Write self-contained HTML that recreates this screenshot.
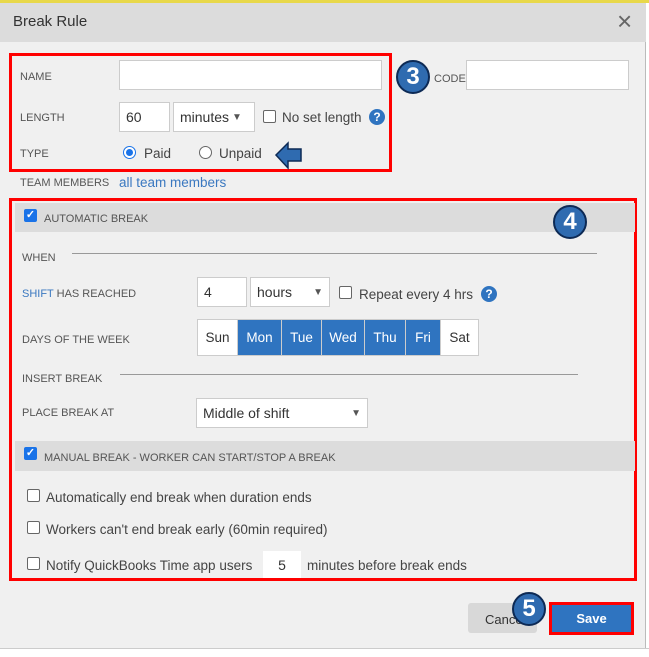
<!DOCTYPE html>
<html><head><style>
*{box-sizing:border-box;margin:0;padding:0}
body{width:649px;height:657px;overflow:hidden;background:#fff;font-family:"Liberation Sans",sans-serif;position:relative;color:#333}
.a{position:absolute}
.lbl{font-size:11px;color:#555;text-transform:uppercase}
.in{position:absolute;background:#fff;border:1px solid #ccc;font-size:14px;padding:0 6px;display:flex;align-items:center}
.t{font-size:13.5px;color:#444;position:absolute}
.cb{position:absolute;width:13px;height:13px;border:1px solid #666;border-radius:2px;background:#fff}
.cbc{position:absolute;width:13px;height:13px;border-radius:2px;background:#1a73e8;color:#fff;font-size:11px;line-height:13px;text-align:center;font-weight:bold}
.q{position:absolute;width:16px;height:16px;border-radius:50%;background:#2f74c0;color:#fff;font-size:12px;font-weight:bold;text-align:center;line-height:16px}
.badge{position:absolute;width:34px;height:34px;border-radius:50%;background:#2f6bb0;border:2px solid #0d2a55;color:#fff;font-size:24px;font-weight:bold;text-align:center;line-height:30px}
.red{position:absolute;border:3px solid #f00}
.day{position:absolute;top:320px;height:35px;font-size:13.5px;display:flex;align-items:center;justify-content:center;border-right:1px solid #ccc}
.hr{position:absolute;height:1px;background:#999}
</style></head><body>
<div class="a" style="left:0;top:0;width:649px;height:3px;background:#e8d84a"></div>
<div class="a" style="left:0;top:3px;width:646px;height:645px;background:#f0f0f0;border-right:1px solid #bbb"></div>
<div class="a" style="left:0;top:3px;width:646px;height:39px;background:#dcdcdc"></div>
<div class="a" style="left:13px;top:13px;font-size:15px;color:#333">Break Rule</div>
<div class="a" style="left:617px;top:6px;font-size:26px;color:#666;font-weight:300">×</div>

<div class="red" style="left:9px;top:53px;width:383px;height:119px"></div>
<div class="lbl a" style="left:20px;top:71px">Name</div>
<div class="in" style="left:119px;top:60px;width:263px;height:30px"></div>
<div class="badge" style="left:396px;top:60px">3</div>
<div class="lbl a" style="left:434px;top:73px">Code</div>
<div class="in" style="left:466px;top:60px;width:163px;height:30px"></div>
<div class="lbl a" style="left:20px;top:112px">Length</div>
<div class="in" style="left:119px;top:102px;width:51px;height:30px">60</div>
<div class="in" style="left:173px;top:102px;width:82px;height:30px">minutes<span style="font-size:10px;color:#555;margin-left:3px">▼</span></div>
<div class="cb" style="left:263px;top:110px"></div>
<div class="t" style="left:282px;top:110px">No set length</div>
<div class="q" style="left:369px;top:109px">?</div>
<div class="lbl a" style="left:20px;top:148px">Type</div>
<div class="a" style="left:123px;top:146px;width:13px;height:13px;border-radius:50%;border:1px solid #1a73e8;background:#fff"><div style="margin:2px;width:7px;height:7px;border-radius:50%;background:#1a73e8"></div></div>
<div class="t" style="left:144px;top:146px">Paid</div>
<div class="a" style="left:199px;top:146px;width:13px;height:13px;border-radius:50%;border:1px solid #666;background:#fff"></div>
<div class="t" style="left:219px;top:146px">Unpaid</div>
<svg class="a" style="left:274px;top:140px" width="30" height="32"><path d="M2 15 L14 3 L14 9 L27 9 L27 21 L14 21 L14 28 Z" fill="#2f6bb0" stroke="#0d2a55" stroke-width="1.5"/></svg>
<div class="lbl a" style="left:20px;top:177px">Team Members</div>
<div class="a" style="left:119px;top:175px;font-size:13.5px;color:#3a78c0">all team members</div>

<div class="red" style="left:9px;top:198px;width:628px;height:383px"></div>
<div class="a" style="left:15px;top:203px;width:620px;height:29px;background:#dcdcdc"></div>
<div class="cbc" style="left:24px;top:209px">✓</div>
<div class="lbl a" style="left:44px;top:213px">Automatic Break</div>
<div class="badge" style="left:553px;top:205px">4</div>
<div class="lbl a" style="left:22px;top:252px">When</div>
<div class="hr" style="left:72px;top:253px;width:525px"></div>
<div class="lbl a" style="left:22px;top:288px"><span style="color:#3a78c0">Shift</span> has reached</div>
<div class="in" style="left:197px;top:277px;width:50px;height:30px">4</div>
<div class="in" style="left:250px;top:277px;width:80px;height:30px">hours<span style="font-size:10px;color:#555;margin-left:auto">▼</span></div>
<div class="cb" style="left:339px;top:286px"></div>
<div class="t" style="left:359px;top:287px">Repeat every 4 hrs</div>
<div class="q" style="left:481px;top:286px">?</div>
<div class="lbl a" style="left:22px;top:334px">Days of the week</div>
<div class="a" style="left:197px;top:319px;width:282px;height:37px;border:1px solid #ccc;background:#fff"></div>
<div class="day" style="left:198px;width:40px;background:#fff">Sun</div>
<div class="day" style="left:238px;width:44px;background:#2f74c0;color:#fff">Mon</div>
<div class="day" style="left:282px;width:40px;background:#2f74c0;color:#fff">Tue</div>
<div class="day" style="left:322px;width:43px;background:#2f74c0;color:#fff">Wed</div>
<div class="day" style="left:365px;width:41px;background:#2f74c0;color:#fff">Thu</div>
<div class="day" style="left:406px;width:35px;background:#2f74c0;color:#fff">Fri</div>
<div class="day" style="left:441px;width:37px;background:#fff;border:none">Sat</div>
<div class="lbl a" style="left:22px;top:373px">Insert Break</div>
<div class="hr" style="left:120px;top:374px;width:458px"></div>
<div class="lbl a" style="left:22px;top:407px">Place break at</div>
<div class="in" style="left:196px;top:398px;width:172px;height:30px">Middle of shift<span style="font-size:10px;color:#555;margin-left:auto">▼</span></div>
<div class="a" style="left:15px;top:441px;width:620px;height:30px;background:#dcdcdc"></div>
<div class="cbc" style="left:24px;top:447px">✓</div>
<div class="lbl a" style="left:44px;top:452px">Manual Break - Worker can start/stop a break</div>
<div class="cb" style="left:27px;top:489px"></div>
<div class="t" style="left:46px;top:490px">Automatically end break when duration ends</div>
<div class="cb" style="left:27px;top:521px"></div>
<div class="t" style="left:46px;top:522px">Workers can't end break early (60min required)</div>
<div class="cb" style="left:27px;top:557px"></div>
<div class="t" style="left:46px;top:558px">Notify QuickBooks Time app users</div>
<div class="in" style="left:263px;top:551px;width:38px;height:27px;border:none;justify-content:center">5</div>
<div class="t" style="left:307px;top:558px">minutes before break ends</div>

<div class="a" style="left:468px;top:603px;width:69px;height:30px;background:#d8d8d8;border-radius:3px;font-size:13px;color:#333;padding:9px 0 0 17px">Cancel</div>
<div class="badge" style="left:512px;top:592px">5</div>
<div class="a" style="left:549px;top:602px;width:85px;height:33px;border:3px solid #f00;background:#2f74c0;color:#fff;font-weight:bold;font-size:13px;text-align:center;line-height:27px">Save</div>
<div class="a" style="left:0;top:648px;width:649px;height:9px;background:#fff;border-top:1px solid #ccc"></div>
</body></html>
